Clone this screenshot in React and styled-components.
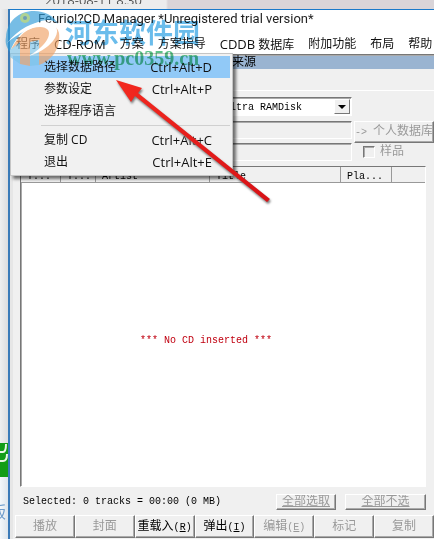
import React from "react";
import styled, { createGlobalStyle } from "styled-components";

const GlobalStyle = createGlobalStyle`
  * {
    box-sizing: border-box;
  }

  body {
    background: #efeff0;
    font-family: "Open Sans", "Noto Sans CJK SC", sans-serif;
    margin: 0;
    overflow: hidden;
  }
`;

const Desktop = styled.div`
  background: linear-gradient(90deg, #ececed 166px, #d9d4d8 168px);
  display: grid;
  grid-template-columns: 8px 1fr;
  min-height: 100vh;
  padding-top: 9px;
  position: relative;
`;

const BackgroundTitle = styled.div`
  color: #555;
  font-size: 13px;
  height: 4px;
  left: 45px;
  line-height: 0;
  overflow: hidden;
  position: absolute;
  top: 0;
`;

const BackgroundPage = styled.div`
  background: linear-gradient(90deg, #efeff0, #dcdcde);
  display: flex;
  flex-direction: column;
  justify-content: flex-end;
  overflow: hidden;
`;

const GreenTile = styled.svg`
  background: #129d16;
  display: block;
  flex: none;
  height: 34px;
  width: 100%;
`;

const BluePage = styled.div`
  background: linear-gradient(90deg, #f4f8fb, #dde5ec);
  color: #6f9dcc;
  font-size: 16px;
  height: 62px;
  padding-top: 22px;
  text-indent: -10px;
  white-space: nowrap;
`;

const Window = styled.main`
  background: #fff;
  border-left: 2px solid #3a7ab8;
  border-top: 1px solid #1979ca;
  display: flex;
  flex-direction: column;
  min-width: 0;
  position: relative;
`;

const TitleBar = styled.header`
  color: #222;
  font-family: Roboto, sans-serif;
  font-size: 13px;
  height: 23px;
  line-height: 18px;
  padding-left: 28px;
  white-space: nowrap;
`;

const MenuBar = styled.nav`
  display: flex;
  gap: 14px;
  height: 21px;
  padding-left: 6px;
`;

const MenuTitle = styled.button`
  background: none;
  border: 0;
  color: #111;
  flex: none;
  font: 12px/22px "Open Sans", "Noto Sans CJK SC", sans-serif;
  height: 22px;
  padding: 0;
  white-space: nowrap;
`;

const Latin = styled.span`
  font-size: 13px;
`;

const Dropdown = styled.ul`
  background: #f1f1f1;
  border: 1px solid #c5c5c5;
  box-shadow: 3px 3px 3px rgba(0, 0, 0, 0.55);
  left: 0;
  list-style: none;
  margin: 0;
  padding: 2px;
  position: absolute;
  top: 43px;
  width: 223px;
`;

const MenuItem = styled.button`
  background: ${(props) => (props.$active ? "#91c9f7" : "transparent")};
  border: 0;
  color: #111;
  display: flex;
  font: 12px/22px "Open Sans", "Noto Sans CJK SC", sans-serif;
  height: 22px;
  justify-content: space-between;
  padding: 0 18px 0 31px;
  width: 100%;
`;

const Divider = styled.li`
  border-top: 1px solid #d0d0d0;
  margin: 3px 0 3px 28px;
`;

const Client = styled.div`
  background: #f0f0f0;
  border-left: 3px solid #e6e6e6;
  border-top: 1px solid #777;
  color: #000;
  display: flex;
  flex: 1;
  flex-direction: column;
  font: 10px/12px "Liberation Mono", "Noto Sans CJK SC", monospace;
  padding-left: 2px;
`;

const SourceBar = styled.div`
  background: #9ab4d1;
  border-top: 1px solid #a9a9a9;
  font-size: 12px;
  height: 14px;
  line-height: 14px;
  padding-left: 217px;
`;

const Form = styled.div`
  align-items: start;
  border-top: 1px solid #fff;
  column-gap: 2px;
  display: grid;
  grid-template-columns: 337px 1fr;
  grid-template-rows: 24px 22px 17px;
  margin-top: 21px;
  padding-top: 6px;
`;

const sunken = `
  border: 1px solid;
  border-color: #777 #fff #fff #777;
  box-shadow: inset 1px 1px #aaa;
`;

const Picker = styled.div`
  ${sunken}
  background: #fff;
  grid-column: 1 / 2;
  height: 19px;
  position: relative;
`;

const DriveSelect = styled.select`
  appearance: none;
  background: transparent;
  border: 0;
  color: #000;
  display: block;
  font: 10px/15px "Liberation Mono", monospace;
  height: 17px;
  padding: 2px 0 0 208px;
  width: 100%;
`;

const PickerArrow = styled.span`
  align-items: center;
  background: #f0f0f0;
  border: 1px solid;
  border-color: #fff #777 #777 #fff;
  bottom: 1px;
  display: flex;
  justify-content: center;
  pointer-events: none;
  position: absolute;
  right: 1px;
  top: 1px;
  width: 16px;

  &::after {
    border: 4px solid transparent;
    border-bottom: 0;
    border-top-color: #000;
    content: "";
  }
`;

const TextField = styled.input`
  ${sunken}
  background: #f0f0f0;
  grid-column: 1;
  height: 18px;
  min-width: 0;
  padding: 0;
`;

const PushButton = styled.button`
  background: #f0f0f0;
  border: 1px solid;
  border-color: #fff #777 #777 #fff;
  box-shadow: inset -1px -1px #aaa;
  color: #000;
  font: 10px/14px "Liberation Mono", "Noto Sans CJK SC", monospace;
  height: 22px;
  overflow: hidden;
  padding: 1px 0 0;
  white-space: nowrap;

  span {
    font-size: 12px;
  }

  &:disabled {
    color: #999;
  }
`;

const Sample = styled.label`
  align-items: center;
  color: #999;
  display: flex;
  font-size: 12px;
  gap: 5px;
  height: 18px;
  padding-left: 9px;
`;

const Checkbox = styled.input`
  ${sunken}
  appearance: none;
  background: #f0f0f0;
  height: 12px;
  margin: 0;
  width: 12px;
`;

const Tracks = styled.section`
  ${sunken}
  background: #fff;
  display: flex;
  flex: 1;
  flex-direction: column;
  margin: 6px 8px 0 5px;
`;

const TrackTable = styled.table`
  border-collapse: separate;
  border-spacing: 0;
  table-layout: fixed;
  width: 100%;

  th {
    background: #f0f0f0;
    border-bottom: 1px solid #999;
    border-right: 1px solid #999;
    font-weight: normal;
    height: 16px;
    line-height: 11px;
    padding: 4px 0 0 6px;
    text-align: left;
    white-space: nowrap;
  }

  th:last-child {
    border-right: 0;
  }
`;

const EmptyMessage = styled.p`
  color: #c00010;
  margin: auto;
  padding: 12px 34px 0 0;
`;

const Status = styled.div`
  align-items: center;
  display: grid;
  gap: 9px;
  grid-template-columns: 1fr 60px 81px;
  height: 28px;
  padding: 2px 8px 0 8px;
`;

const StatusButton = styled(PushButton)`
  height: 16px;
  line-height: 12px;
  text-decoration: underline;
`;

const Actions = styled.footer`
  display: grid;
  grid-template-columns: repeat(7, 1fr);
  padding-bottom: 1px;

  button {
    height: 23px;
  }
`;

const Watermark = styled.svg`
  height: 100%;
  left: 0;
  pointer-events: none;
  position: absolute;
  top: 0;
  width: 434px;
`;

const SiteMark = styled.g`
  mix-blend-mode: multiply;
`;

const menuTitles = [
  { label: "程序" },
  { latin: "CD-ROM" },
  { label: "方案" },
  { label: "方案指导" },
  { latin: "CDDB", label: " 数据库" },
  { label: "附加功能" },
  { label: "布局" },
  { label: "帮助" },
];

const menuItems = [
  { label: "选择数据路径", shortcut: "Ctrl+Alt+D", active: true },
  { label: "参数设定", shortcut: "Ctrl+Alt+P" },
  { label: "选择程序语言" },
  { divider: true },
  { label: "复制 CD", shortcut: "Ctrl+Alt+C" },
  { label: "退出", shortcut: "Ctrl+Alt+E" },
];

const columns = [
  { label: "T...", width: 40 },
  { label: "T...", width: 35 },
  { label: "Artist", width: 114 },
  { label: "Title", width: 131 },
  { label: "Pla...", width: 51 },
  { label: "" },
];

const actions = [
  { label: "播放" },
  { label: "封面" },
  { label: "重载入", hotkey: "R", enabled: true },
  { label: "弹出", hotkey: "I", enabled: true },
  { label: "编辑", hotkey: "E" },
  { label: "标记" },
  { label: "复制" },
];

const Overlay = () => (
  <Watermark aria-hidden="true">
    <defs>
      <linearGradient id="pointer" x1="0" x2="1">
        <stop offset="0" stopColor="#f42a20" />
        <stop offset="1" stopColor="#d71116" />
      </linearGradient>
    </defs>
    <g opacity="0.65">
      <path
        d="M6 37C7 21 19 11 34 11c11 0 20 5 24 13-5-5-13-5-22-1C23 29 14 40 10 52 6 47 5 42 6 37Z"
        fill="#2f9bd8"
      />
      <path
        d="M59 33c2 15-7 27-20 32V47l-9 4v15l-10-2V46l-10 6c5-12 14-22 25-25 12-4 22-3 24 6Z"
        fill="#f0a266"
      />
      <path d="M10 50v7l10 7V42Zm20-8v24l9-1V40Z" fill="#7cc3e8" />
      <path
        d="M7 43C20 27 37 20 48 22c10 2 12 10 5 19-6 7-14 12-24 15 15-9 23-20 19-26-6-7-25-1-41 13Z"
        fill="#fff"
      />
      <circle cx="25" cy="18" r="5" fill="#83bb5c" />
      <circle cx="25" cy="18" r="2" fill="#216a90" />
    </g>
    <SiteMark>
      <text
        x="65"
        y="43"
        fill="#39a6e4"
        fontFamily="Noto Sans CJK SC, sans-serif"
        fontSize="27"
        fontWeight="700"
        opacity="0.75"
      >
        河东软件园
      </text>
      <text
        x="67"
        y="65"
        fill="#35b56a"
        fontFamily="Liberation Serif, serif"
        fontSize="20"
        fontWeight="700"
        opacity="0.8"
      >
        www.pc0359.cn
      </text>
    </SiteMark>
    <path
      d="m116 80 26 8-4 5 132 106-3 3-132-106-4 6Z"
      fill="url(#pointer)"
      filter="drop-shadow(1px 2px 1px #777)"
    />
  </Watermark>
);

const App = () => (
  <>
    <GlobalStyle />
    <Desktop>
      <BackgroundTitle>2018-08-11 8:30</BackgroundTitle>
      <BackgroundPage>
        <GreenTile viewBox="0 0 8 34" aria-hidden="true">
          <path
            d="M0 9h3q3 0 3-8M0 18h3q4 0 4-7"
            fill="none"
            stroke="#e9f7e5"
            strokeWidth="2"
          />
        </GreenTile>
        <BluePage>版</BluePage>
      </BackgroundPage>
      <Window>
        <TitleBar>Feurio!?CD Manager *Unregistered trial version*</TitleBar>
        <MenuBar>
          {menuTitles.map(({ label, latin }) => (
            <MenuTitle key={label || latin}>
              {latin && <Latin>{latin}</Latin>}
              {label}
            </MenuTitle>
          ))}
        </MenuBar>
        <Client>
          <SourceBar>来源</SourceBar>
          <Form>
            <Picker>
              <DriveSelect aria-label="Drive">
                <option>Ultra RAMDisk</option>
              </DriveSelect>
              <PickerArrow />
            </Picker>
            <TextField aria-label="Artist" disabled />
            <PushButton disabled>
              -&gt; <span>个人数据库</span>
            </PushButton>
            <TextField aria-label="Title" disabled />
            <Sample>
              <Checkbox type="checkbox" disabled />
              样品
            </Sample>
          </Form>
          <Tracks>
            <TrackTable>
              <colgroup>
                {columns.map((column, i) => (
                  <col key={i} width={column.width} />
                ))}
              </colgroup>
              <thead>
                <tr>
                  {columns.map((column, i) => (
                    <th key={i}>{column.label}</th>
                  ))}
                </tr>
              </thead>
            </TrackTable>
            <EmptyMessage>*** No CD inserted ***</EmptyMessage>
          </Tracks>
          <Status>
            Selected: 0 tracks = 00:00 (0 MB)
            <StatusButton disabled>
              <span>全部选取</span>
            </StatusButton>
            <StatusButton disabled>
              <span>全部不选</span>
            </StatusButton>
          </Status>
          <Actions>
            {actions.map(({ label, hotkey, enabled }) => (
              <PushButton key={label} disabled={!enabled}>
                <span>{label}</span>
                {hotkey && (
                  <>
                    (<u>{hotkey}</u>)
                  </>
                )}
              </PushButton>
            ))}
          </Actions>
        </Client>
        <Dropdown>
          {menuItems.map((item, i) =>
            item.divider ? (
              <Divider key={i} />
            ) : (
              <li key={item.label}>
                <MenuItem $active={item.active}>
                  <span>{item.label}</span>
                  <Latin>{item.shortcut}</Latin>
                </MenuItem>
              </li>
            )
          )}
        </Dropdown>
      </Window>
      <Overlay />
    </Desktop>
  </>
);

export default App;
